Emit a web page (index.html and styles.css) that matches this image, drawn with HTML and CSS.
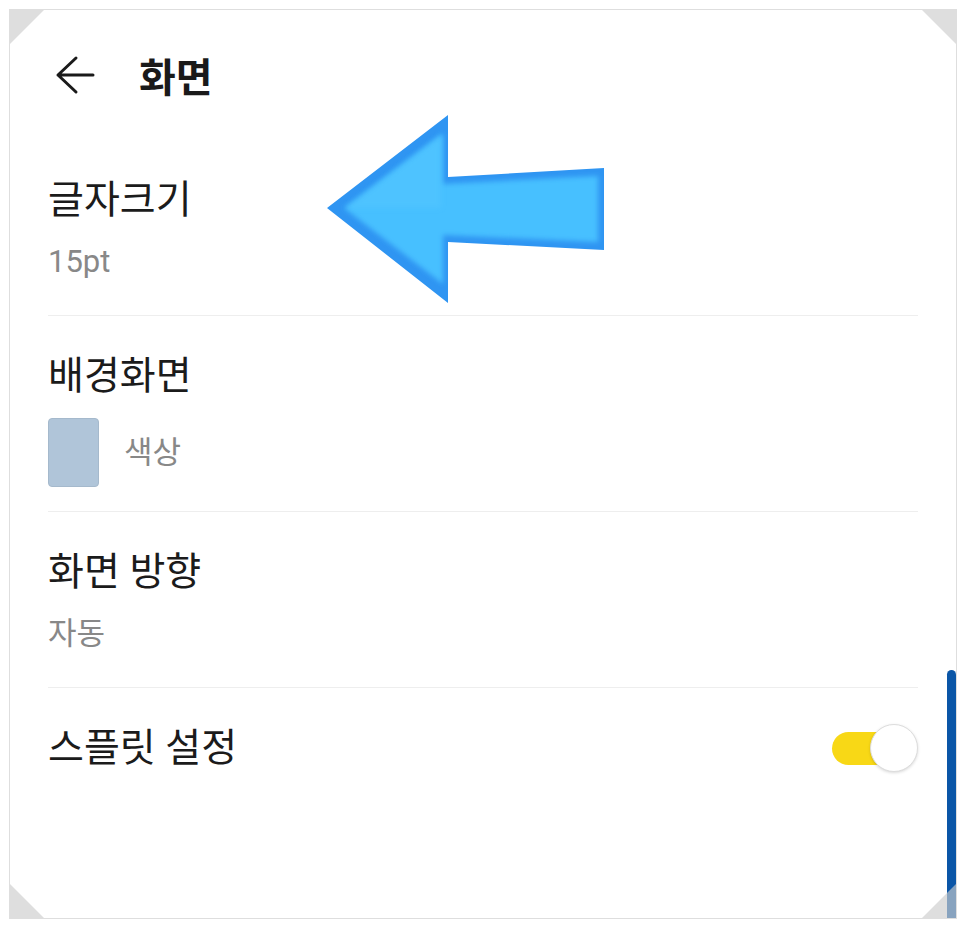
FILE: index.html
```html
<!DOCTYPE html>
<html lang="ko">
<head>
  <meta charset="UTF-8">
  <meta name="viewport" content="width=device-width, initial-scale=1.0">
  <title>화면</title>
  <link rel="stylesheet" href="styles.css">
</head>
<body>
  <div class="frame">
    <!-- Header -->
    <div class="header">
      <svg class="back-icon" width="40" height="40" viewBox="0 0 40 40">
        <path d="M38 20 H3 M21 3 L3 20 L21 37" fill="none" stroke="#1a1a1a" stroke-width="3" stroke-linecap="round" stroke-linejoin="round"/>
      </svg>
      <span class="header-title">화면</span>
    </div>

    <div class="settings">
      <div class="setting-item">
        <div class="setting-title">글자크기</div>
        <div class="setting-sub">15pt</div>
      </div>

      <div class="setting-item wallpaper">
        <div class="setting-title">배경화면</div>
        <div class="swatch-row">
          <div class="swatch"></div>
          <span class="setting-sub">색상</span>
        </div>
      </div>

      <div class="setting-item">
        <div class="setting-title">화면 방향</div>
        <div class="setting-sub">자동</div>
      </div>

      <div class="setting-item last">
        <div class="toggle-row">
          <div class="setting-title">스플릿 설정</div>
          <div class="toggle">
            <div class="toggle-track"></div>
            <div class="toggle-knob"></div>
          </div>
        </div>
      </div>
    </div>

    <!-- Annotation arrow -->
    <svg class="pointer-arrow" width="295" height="205" viewBox="0 0 295 205">
      <defs>
        <filter id="soft" x="-10%" y="-10%" width="120%" height="120%">
          <feGaussianBlur stdDeviation="2.5"/>
        </filter>
      </defs>
      <polygon points="7,100 128,7 128,69 284,60 284,142 128,134 128,195" fill="#2f95f2"/>
      <polygon points="24,100 123,25 123,76 278,68 278,134 123,127 123,176" fill="#47c0ff" filter="url(#soft)"/>
      <polygon points="26,100 121,28 121,100" fill="#55c6ff" opacity="0.5" filter="url(#soft)"/>
    </svg>

    <div class="scrollbar"></div>

    <div class="corner tl"></div>
    <div class="corner tr"></div>
    <div class="corner bl"></div>
    <div class="corner br"></div>
  </div>
</body>
</html>
```

FILE: styles.css
```css
body {
  margin: 0;
  background-color: #ffffff;
  font-family: Roboto, "Noto Sans CJK KR", sans-serif;
  color: #1b1b1b;
}

.frame {
  position: relative;
  margin: 9px 0 0 9px;
  width: 946px;
  height: 908px;
  border: 1px solid #dedede;
  overflow: hidden;
  background-color: #fff;
}

.header {
  display: flex;
  align-items: center;
  height: 130px;
  padding-left: 45px;
}

.back-icon {
  display: block;
}

.header-title {
  margin-left: 44px;
  font-size: 40px;
  font-weight: bold;
  color: #1a1a1a;
}

.settings {
  padding: 0 38px;
}

.setting-item {
  padding: 36px 0 33px;
  border-bottom: 1px solid #eeeeee;
}

.setting-item.wallpaper {
  padding-bottom: 24px;
}

.setting-item.last {
  border-bottom: none;
}

.setting-title {
  font-size: 39px;
  line-height: 48px;
  color: #1b1b1b;
}

.setting-sub {
  margin-top: 18px;
  font-size: 31px;
  line-height: 40px;
  color: #888888;
}

.swatch-row {
  display: flex;
  align-items: center;
  gap: 25px;
  margin-top: 18px;
}

.swatch-row .setting-sub {
  margin-top: 0;
}

.swatch {
  width: 51px;
  height: 69px;
  border-radius: 4px;
  background-color: #b0c5d9;
  border: 1px solid #a5b9cc;
  box-sizing: border-box;
}

.toggle-row {
  display: flex;
  align-items: center;
  justify-content: space-between;
}

.toggle {
  position: relative;
  width: 86px;
  height: 48px;
}

.toggle-track {
  position: absolute;
  left: 0;
  top: 8px;
  width: 60px;
  height: 33px;
  border-radius: 17px;
  background-color: #f8d816;
}

.toggle-knob {
  position: absolute;
  right: 0;
  top: 0;
  width: 46px;
  height: 46px;
  border-radius: 50%;
  background-color: #fff;
  border: 1px solid #dddddd;
  box-shadow: 0 1px 3px rgba(0, 0, 0, 0.15);
}

.pointer-arrow {
  position: absolute;
  left: 310px;
  top: 98px;
}

.scrollbar {
  position: absolute;
  right: 0;
  top: 660px;
  width: 9px;
  height: 260px;
  border-radius: 5px 5px 0 0;
  background-color: #0b56a7;
}

.corner {
  position: absolute;
  width: 34px;
  height: 34px;
  background-color: rgba(205, 205, 205, 0.65);
}

.corner.tl {
  left: 0;
  top: 0;
  clip-path: polygon(0 0, 100% 0, 0 100%);
}

.corner.tr {
  right: 0;
  top: 0;
  clip-path: polygon(0 0, 100% 0, 100% 100%);
}

.corner.bl {
  left: 0;
  bottom: 0;
  clip-path: polygon(0 0, 100% 100%, 0 100%);
}

.corner.br {
  right: 0;
  bottom: 0;
  clip-path: polygon(100% 0, 100% 100%, 0 100%);
}
```
